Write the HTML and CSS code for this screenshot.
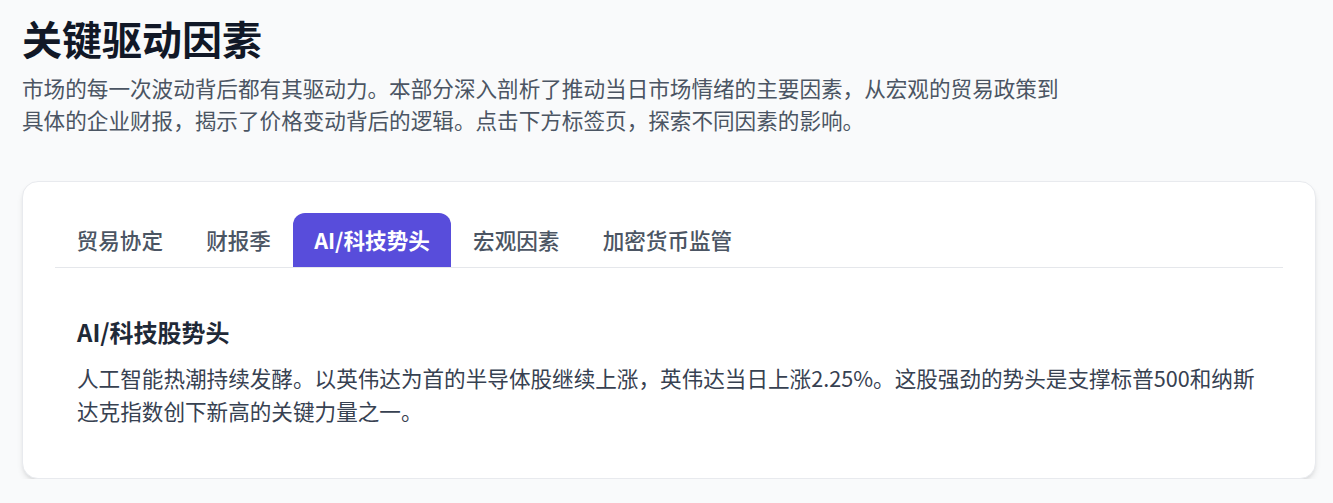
FILE: index.html
```html
<!DOCTYPE html>
<html lang="zh-CN">
<head>
<meta charset="utf-8">
<title>关键驱动因素</title>
<link rel="stylesheet" href="styles.css">
</head>
<body>
<main class="page">
  <header class="intro">
    <h1 class="title">关键驱动因素</h1>
    <p class="lead">市场的每一次波动背后都有其驱动力。本部分深入剖析了推动当日市场情绪的主要因素，从宏观的贸易政策到具体的企业财报，揭示了价格变动背后的逻辑。点击下方标签页，探索不同因素的影响。</p>
  </header>
  <section class="card">
    <nav class="tabs">
      <button class="tab">贸易协定</button>
      <button class="tab">财报季</button>
      <button class="tab active">AI/科技势头</button>
      <button class="tab">宏观因素</button>
      <button class="tab">加密货币监管</button>
    </nav>
    <div class="panel">
      <h2 class="panel-title">AI/科技股势头</h2>
      <p class="panel-text">人工智能热潮持续发酵。以英伟达为首的半导体股继续上涨，英伟达当日上涨2.25%。这股强劲的势头是支撑标普500和纳斯达克指数创下新高的关键力量之一。</p>
    </div>
  </section>
</main>
</body>
</html>
```

FILE: styles.css
```css
* { box-sizing: border-box; }
html, body { margin: 0; padding: 0; }
body {
  background: #f9fafb;
  font-family: "Noto Sans CJK SC", "Noto Sans", sans-serif;
  color: #1f2937;
}
.page {
  padding: 14px 17px 0 22px;
}
.intro { margin-bottom: 44px; }
.title {
  margin: 0;
  font-size: 40px;
  line-height: 48px;
  font-weight: 700;
  color: #111827;
}
.lead {
  margin: 10px 0 0 0;
  max-width: 1042px;
  font-size: 21.6px;
  line-height: 32.4px;
  color: #4b5563;
}
.card {
  background: #ffffff;
  border: 1px solid #e8eaee;
  border-radius: 16px;
  box-shadow: 0 4px 6px -1px rgba(0,0,0,0.1), 0 2px 4px -2px rgba(0,0,0,0.08);
  padding: 31px 32px 33px 32px;
}
.tabs {
  display: flex;
  border-bottom: 1px solid #e5e7eb;
  margin-bottom: 26px;
}
.tab {
  border: 0;
  background: transparent;
  font-family: inherit;
  font-size: 21.6px;
  line-height: 32px;
  font-weight: 500;
  color: #4b5563;
  padding: 11px 21.6px;
  border-radius: 12px 12px 0 0;
  cursor: pointer;
}
.tab.active {
  background: #584ddb;
  color: #ffffff;
  font-weight: 700;
}
.panel {
  padding: 22px 22px 18px 22px;
}
.panel-title {
  margin: 0 0 13px 0;
  font-size: 24px;
  line-height: 32px;
  font-weight: 700;
  color: #1f2937;
}
.panel-text {
  margin: 0;
  font-size: 21.6px;
  line-height: 33px;
  color: #374151;
}
```
